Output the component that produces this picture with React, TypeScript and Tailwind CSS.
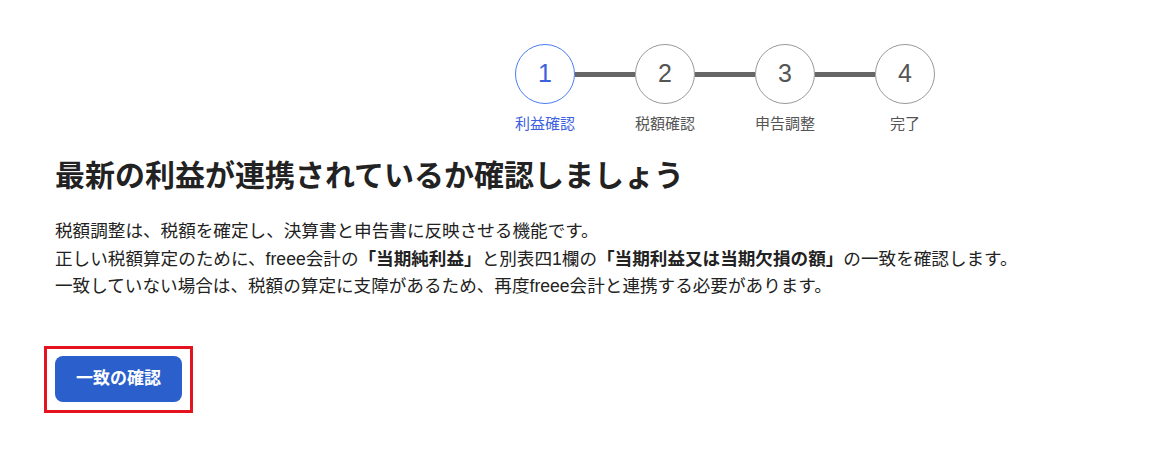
import React from "react";

const steps = [
  { n: "1", label: "利益確認", active: true },
  { n: "2", label: "税額確認", active: false },
  { n: "3", label: "申告調整", active: false },
  { n: "4", label: "完了", active: false },
];

export default function App() {
  return (
    <div
      className="w-[1176px] h-[452px] bg-white text-[#222] overflow-hidden"
      style={{ fontFamily: '"Liberation Sans", "Noto Sans CJK JP", sans-serif' }}
    >
      <div className="pt-[44px] ml-[485px] w-[480px]">
        <div className="flex items-center px-[30px]">
          {steps.map((s, i) => (
            <React.Fragment key={s.n}>
              {i > 0 && <div className="w-[60px] h-[5px] bg-[#666]" />}
              <div
                className={
                  s.active
                    ? "w-[60px] h-[60px] rounded-full border border-[#4a7df2] text-[#3d5fe0] flex items-center justify-center text-[25px]"
                    : "w-[60px] h-[60px] rounded-full border border-[#999] text-[#555] flex items-center justify-center text-[25px]"
                }
              >
                {s.n}
              </div>
            </React.Fragment>
          ))}
        </div>
        <div className="grid grid-cols-4 mt-[10px]">
          {steps.map((s) => (
            <div
              key={s.n}
              className={
                s.active
                  ? "text-center text-[15px] leading-[20px] text-[#3d5fe0]"
                  : "text-center text-[15px] leading-[20px] text-[#555]"
              }
            >
              {s.label}
            </div>
          ))}
        </div>
      </div>

      <div className="pl-[55px]">
        <h1 className="mt-[22px] text-[30px] leading-[40px] font-bold text-[#222]">
          最新の利益が連携されているか確認しましょう
        </h1>
        <div className="mt-[22px] text-[17.6px] leading-[27.5px] text-[#222]">
          <p>税額調整は、税額を確定し、決算書と申告書に反映させる機能です。</p>
          <p>
            正しい税額算定のために、freee会計の<b className="font-bold">「当期純利益」</b>と別表四1欄の
            <b className="font-bold">「当期利益又は当期欠損の額」</b>の一致を確認します。
          </p>
          <p>一致していない場合は、税額の算定に支障があるため、再度freee会計と連携する必要があります。</p>
        </div>
        <div className="mt-[45px] ml-[-11px] inline-block border-[3px] border-[#e3141f] px-[8px] pt-[7px] pb-[8px]">
          <button className="w-[127px] h-[46px] rounded-[8px] bg-[#2b5fcb] text-white font-bold text-[17px] flex items-center justify-center">
            一致の確認
          </button>
        </div>
      </div>
    </div>
  );
}
